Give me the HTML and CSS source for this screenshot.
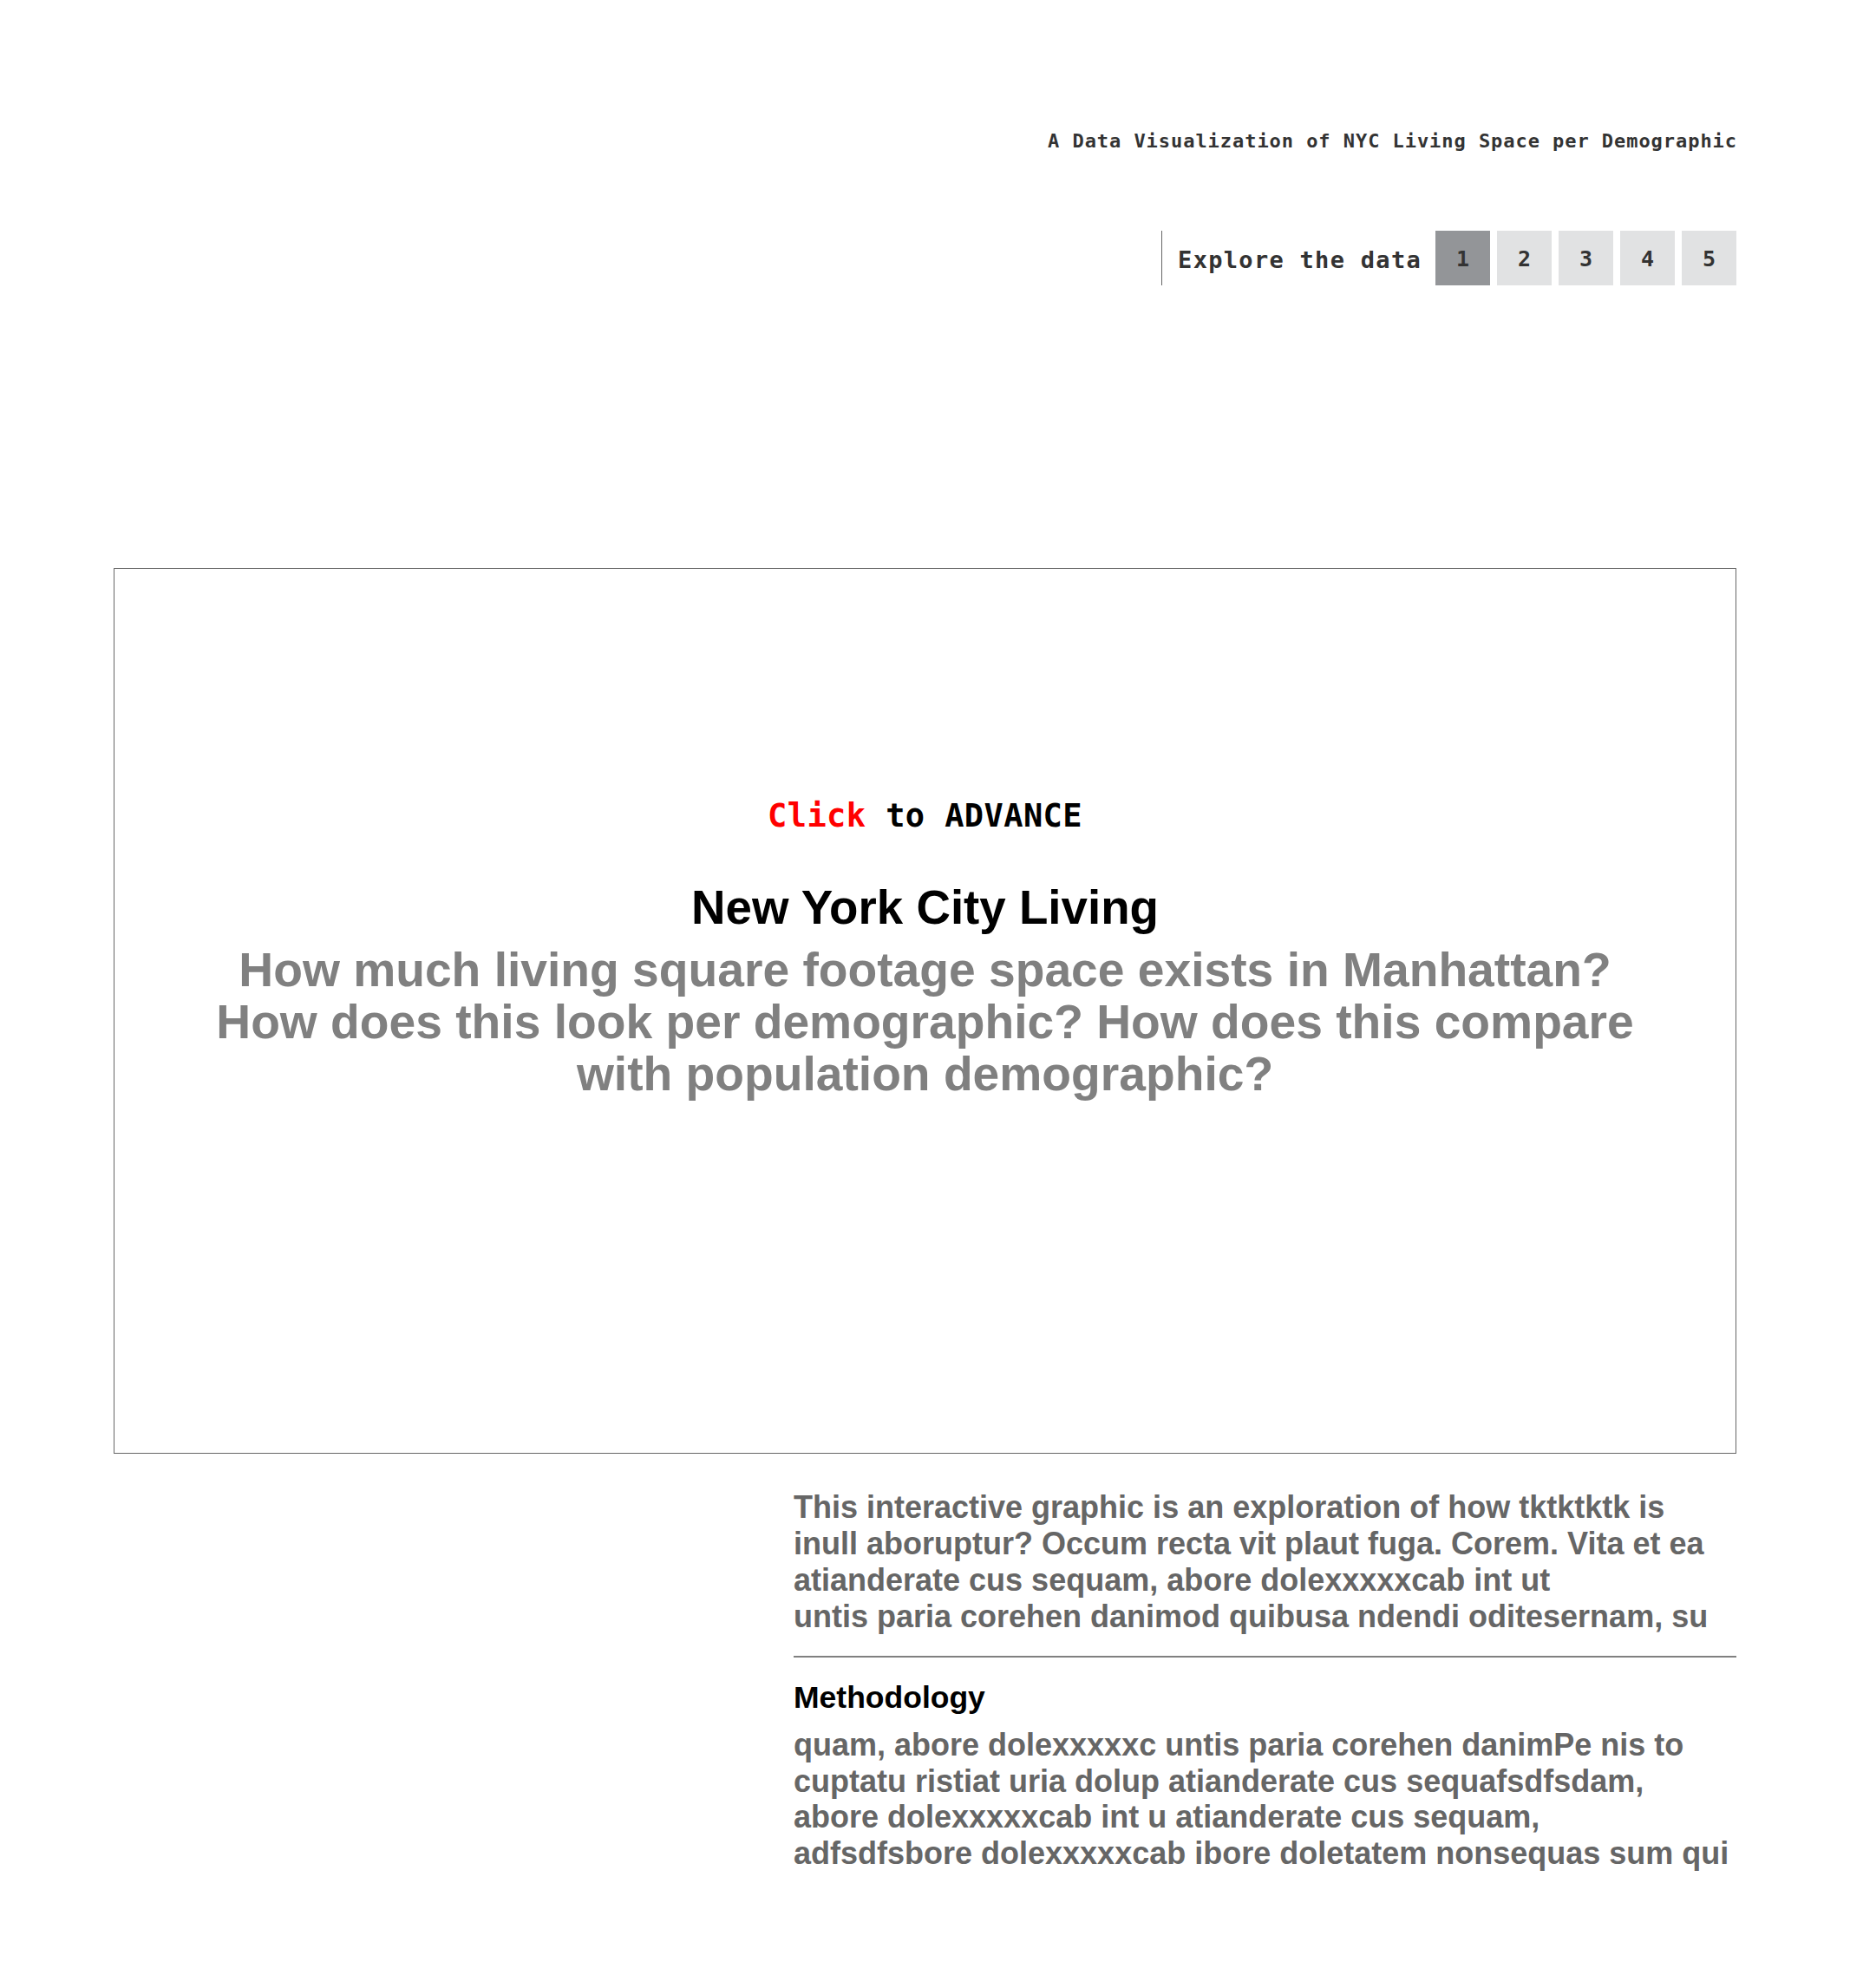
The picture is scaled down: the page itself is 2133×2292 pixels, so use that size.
FILE: index.html
```html
<!DOCTYPE html>
<html lang="en">
<head>
<meta charset="utf-8">
<title>NYC Living Space per Demographic</title>
<link rel="stylesheet" href="styles.css">
</head>
<body>
<div class="page">
  <header class="top">
    <p class="kicker">A Data Visualization of NYC Living Space per Demographic</p>
    <nav class="explore">
      <div class="explore-inner">
        <span class="explore-label">Explore the data</span>
        <ol class="steps">
          <li class="step step-active">1</li>
          <li class="step">2</li>
          <li class="step">3</li>
          <li class="step">4</li>
          <li class="step">5</li>
        </ol>
      </div>
    </nav>
  </header>

  <main class="stage">
    <p class="advance"><span class="advance-click">Click</span> to ADVANCE</p>
    <h1 class="title">New York City Living</h1>
    <p class="questions">How much living square footage space exists in Manhattan?<br>How does this look per demographic? How does this compare<br>with population demographic?</p>
  </main>

  <section class="notes">
    <div class="notes-spacer"></div>
    <div class="notes-body">
      <p class="intro">This interactive graphic is an exploration of how tktktktk is<br>inull aboruptur? Occum recta vit plaut fuga. Corem. Vita et ea<br>atianderate cus sequam, abore dolexxxxxcab int ut<br>untis paria corehen danimod quibusa ndendi oditesernam, su</p>
      <hr class="rule">
      <h2 class="method-title">Methodology</h2>
      <p class="method-text">quam, abore dolexxxxxc untis paria corehen danimPe nis to<br>cuptatu ristiat uria dolup atianderate cus sequafsdfsdam,<br>abore dolexxxxxcab int u atianderate cus sequam,<br>adfsdfsbore dolexxxxxcab ibore doletatem nonsequas sum qui</p>
    </div>
  </section>
</div>
</body>
</html>
```

FILE: styles.css
```css
html, body {
  margin: 0;
  padding: 0;
  background: #ffffff;
}

.page {
  padding: 0 131px 120px 131px;
  font-family: "Liberation Sans", Arial, sans-serif;
}

.top {
  padding-top: 152px;
}

.kicker {
  margin: 0;
  text-align: right;
  font-family: "DejaVu Sans Mono", monospace;
  font-weight: bold;
  font-size: 22px;
  line-height: 21px;
  letter-spacing: 0.95px;
  color: #333333;
  margin-right: -1px;
}

.explore {
  display: flex;
  justify-content: flex-end;
  margin-top: 93px;
}

.explore-inner {
  display: flex;
  align-items: center;
  border-left: 1px solid #666666;
  height: 63px;
}

.explore-label {
  font-family: "DejaVu Sans Mono", monospace;
  font-weight: bold;
  font-size: 27px;
  letter-spacing: 1.3px;
  color: #333333;
  padding-left: 18px;
  padding-top: 4px;
  margin-right: 16px;
}

.steps {
  list-style: none;
  margin: 0;
  padding: 0;
  display: flex;
  gap: 8px;
}

.step {
  width: 63px;
  height: 63px;
  display: flex;
  align-items: center;
  justify-content: center;
  background: #e1e2e3;
  color: #333333;
  font-family: "DejaVu Sans Mono", monospace;
  font-weight: bold;
  font-size: 25px;
  padding-top: 2px;
  box-sizing: border-box;
}

.step-active {
  background: #939598;
}

.stage {
  margin-top: 326px;
  height: 1021px;
  box-sizing: border-box;
  border: 1px solid #666666;
  padding-top: 263px;
  text-align: center;
}

.advance {
  margin: 0;
  font-family: "DejaVu Sans Mono", monospace;
  font-weight: bold;
  font-size: 37px;
  letter-spacing: 0.4px;
  color: #000000;
}

.advance-click {
  color: #ff0000;
}

.title {
  margin: 54px 0 0 0;
  font-size: 54.7px;
  line-height: 60px;
  font-weight: bold;
  color: #000000;
}

.questions {
  margin: 12px 0 0 0;
  font-size: 55.2px;
  line-height: 60px;
  font-weight: bold;
  color: #808080;
}

.notes {
  display: grid;
  grid-template-columns: 1fr 1087px;
  margin-top: 41px;
}

.notes-body {
  min-width: 0;
}

.intro {
  margin: 0;
  font-size: 36px;
  line-height: 42px;
  font-weight: bold;
  color: #666666;
  white-space: nowrap;
}

.rule {
  margin: 24px 0 0 0;
  border: 0;
  border-top: 2px solid #808080;
  height: 0;
}

.method-title {
  margin: 25px 0 0 0;
  font-size: 35.5px;
  line-height: 42px;
  font-weight: bold;
  color: #000000;
}

.method-text {
  margin: 13px 0 0 0;
  font-size: 36px;
  line-height: 41.5px;
  font-weight: bold;
  color: #666666;
  white-space: nowrap;
}
```
